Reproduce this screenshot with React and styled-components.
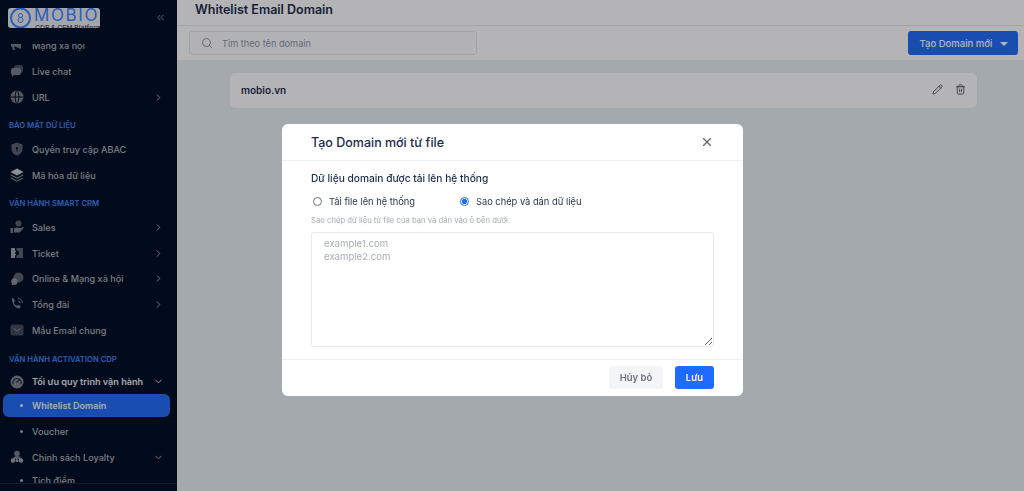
import React from 'react';
import styled, { createGlobalStyle } from 'styled-components';
import { ChevronRight, ChevronDown, ChevronsLeft, Search, Pencil, Trash2, X } from 'lucide-react';

const FONT = '"Inter", "Noto Sans", sans-serif';

const GlobalStyle = createGlobalStyle`
  html, body { margin: 0; padding: 0; height: 100%; }
  body { font-family: ${FONT}; background: #fff; overflow: hidden; }
  * { box-sizing: border-box; }
`;

const Page = styled.div`
  display: flex;
  width: 1024px;
  height: 491px;
  overflow: hidden;
`;

const Sidebar = styled.aside`
  width: 177px;
  flex: none;
  height: 100%;
  background: #010e20;
  display: flex;
  flex-direction: column;
`;

const SidebarHead = styled.div`
  height: 44px;
  flex: none;
  padding: 8px 0 0 8px;
  display: flex;
  justify-content: space-between;
  align-items: flex-start;
`;

const Logo = styled.div`
  width: 92px;
  height: 20px;
  background: #eaebf0;
  border-radius: 3px;
  display: flex;
  align-items: flex-start;
  overflow: hidden;
  color: #3b85ff;
`;

const LogoText = styled.div`
  display: flex;
  flex-direction: column;
  margin-left: 2px;
`;

const LogoName = styled.span`
  font-size: 17px;
  font-weight: 400;
  line-height: 15px;
  letter-spacing: 1.6px;
`;

const LogoSub = styled.span`
  font-size: 6.8px;
  font-weight: 600;
  line-height: 7px;
  color: #4d5560;
  white-space: nowrap;
  margin: 1px 0 0 1px;
`;

const Collapse = styled.span`
  color: #9096a0;
  margin: 4px 11px 0 0;
  display: flex;
`;

const Menu = styled.nav`
  flex: 1;
  overflow: hidden;
  padding: 0 7px 0 3px;
`;

const Scrolled = styled.div`
  margin-top: -12px;
`;

const Row = styled.div`
  height: ${p => p.$h || 26}px;
  display: flex;
  align-items: center;
  padding-left: 6px;
  padding-right: 6px;
  border-radius: 6px;
  font-size: 9.1px;
  font-weight: ${p => (p.$strong ? 600 : 500)};
  color: ${p => (p.$strong ? '#e8e9ec' : '#b0b2b8')};
  white-space: nowrap;
`;

const ActiveRow = styled(Row)`
  height: 23px;
  margin-bottom: 1px;
  background: #216cf5;
  color: #eef1f6;
  font-weight: 600;
`;

const IconBox = styled.span`
  width: 16px;
  height: 16px;
  margin-right: 7px;
  display: flex;
  align-items: center;
  justify-content: center;
  flex: none;
`;

const Dot = styled.span`
  width: 3px;
  height: 3px;
  border-radius: 50%;
  background: currentColor;
  margin: 0 9px 0 11px;
  flex: none;
`;

const Label = styled.span`
  flex: 1;
`;

const Section = styled.div`
  font-size: 7.65px;
  font-weight: 600;
  color: #3f82f5;
  padding: 1px 0 0 6px;
  height: 16px;
  line-height: 16px;
  margin-top: ${p => p.$top}px;
  margin-bottom: ${p => p.$bottom}px;
  white-space: nowrap;
`;

const SidebarFoot = styled.div`
  height: 8px;
  flex: none;
  border-top: 1px solid #1d2638;
`;

const Main = styled.main`
  flex: 1;
  display: flex;
  flex-direction: column;
  background: #e9eff2;
  min-width: 0;
`;

const TopBar = styled.header`
  height: 26px;
  background: #fff;
  border-bottom: 1px solid #e8eaee;
  padding-left: 18px;
  font-size: 12.5px;
  font-weight: 600;
  color: #1c2b4a;
  line-height: 20px;
`;

const Toolbar = styled.div`
  height: 34px;
  background: #fff;
  display: flex;
  align-items: center;
  justify-content: space-between;
  padding: 0 6px 0 12px;
  flex: none;
`;

const SearchBox = styled.div`
  width: 288px;
  height: 24px;
  border: 1px solid #e3e6ea;
  border-radius: 3px;
  display: flex;
  align-items: center;
  padding-left: 11px;
  gap: 9px;
  font-size: 9.2px;
  color: #8d939e;
  background: #fdfdfe;
`;

const CreateButton = styled.button`
  width: 110px;
  height: 24px;
  border: 0;
  border-radius: 3px;
  background: #216cf5;
  color: #fff;
  font: 500 9.5px ${FONT};
  display: flex;
  align-items: center;
  justify-content: center;
  gap: 8px;
  padding: 0 0 0 2px;
`;

const Caret = styled.span`
  width: 0;
  height: 0;
  border-left: 4px solid transparent;
  border-right: 4px solid transparent;
  border-top: 4px solid #fff;
  margin-top: 2px;
`;

const Content = styled.div`
  flex: 1;
  padding: 13px 47px 0 53px;
`;

const DomainCard = styled.div`
  height: 35px;
  background: #fff;
  border-radius: 5px;
  display: flex;
  align-items: center;
  justify-content: space-between;
  padding: 0 11px 2px;
  font-size: 10px;
  font-weight: 600;
  color: #1c2b4a;
  box-shadow: 0 0 1px rgba(0, 0, 0, 0.12);
`;

const CardActions = styled.div`
  display: flex;
  gap: 12px;
  color: #4f5662;
`;

const Overlay = styled.div`
  position: fixed;
  inset: 0;
  background: rgba(5, 7, 15, 0.3);
  display: flex;
  align-items: flex-start;
  justify-content: center;
  padding: 124px 0 0 1px;
`;

const Dialog = styled.div`
  width: 461px;
  height: 272px;
  background: #fff;
  border-radius: 6px;
  display: flex;
  flex-direction: column;
`;

const DialogHead = styled.div`
  height: 37px;
  flex: none;
  border-bottom: 1px solid #eef0f3;
  padding: 0 29px;
  display: flex;
  align-items: center;
  justify-content: space-between;
  font-size: 12.5px;
  font-weight: 500;
  color: #1c2b4a;
`;

const CloseIcon = styled.span`
  color: #5f6675;
  display: flex;
`;

const DialogBody = styled.div`
  flex: 1;
  padding: 10px 29px 0;
  display: flex;
  flex-direction: column;
`;

const FieldTitle = styled.div`
  font-size: 10.2px;
  font-weight: 500;
  color: #1c2b4a;
  line-height: 14px;
`;

const Radios = styled.div`
  display: flex;
  margin-top: 9px;
  height: 14px;
`;

const RadioItem = styled.label`
  display: flex;
  align-items: center;
  gap: 7px;
  padding-left: 2px;
  width: 147px;
  font-size: 9.3px;
  color: #2b3648;
  white-space: nowrap;
`;

const RadioMark = styled.span`
  width: 9px;
  height: 9px;
  border-radius: 50%;
  border: 1px solid ${p => (p.$on ? '#216cf5' : '#6b7280')};
  background: ${p => (p.$on ? 'radial-gradient(circle, #216cf5 0 2.4px, #fff 2.9px)' : '#fff')};
  flex: none;
`;

const Hint = styled.div`
  margin-top: 8px;
  font-size: 7.7px;
  line-height: 10px;
  color: #a5aab3;
`;

const Area = styled.textarea`
  margin-top: 6px;
  width: 403px;
  height: 115px;
  border: 1px solid #e8eaee;
  border-radius: 3px;
  padding: 4px 12px;
  font: 400 9.6px/13px ${FONT};
  color: #333;
  outline: none;
  &::placeholder { color: #a9adb5; }
`;

const DialogFoot = styled.div`
  height: 37px;
  flex: none;
  border-top: 1px solid #eef0f3;
  padding: 6px 29px 0 0;
  display: flex;
  justify-content: flex-end;
  gap: 12px;
`;

const GhostButton = styled.button`
  width: 54px;
  height: 23px;
  border: 0;
  border-radius: 3px;
  background: #f4f5f7;
  color: #6b7280;
  font: 600 9.5px ${FONT};
  padding: 0;
`;

const SaveButton = styled(GhostButton)`
  width: 39px;
  background: #1f6bff;
  color: #fff;
`;

// duotone sidebar glyphs, drawn on a 16 box
const Glyph = ({ children }) => (
  <svg width="16" height="16" viewBox="0 0 16 16" fill="#7a7f89">{children}</svg>
);

const MegaphoneIcon = () => (
  <Glyph><path d="M2 6h4l6-3v9L6 9.5H5l1 3.5H4L3 9.500H2z" /></Glyph>
);
const ChatIcon = () => (
  <Glyph>
    <rect x="5" y="2" width="9" height="8" rx="2.500" fill="#4c515c" />
    <path d="M4 5h6a2 2 0 0 1 2 2v3a2 2 0 0 1-2 2H5l-2 2v-2.200A2 2 0 0 1 2 10V7a2 2 0 0 1 2-2z" />
  </Glyph>
);
const GlobeIcon = () => (
  <Glyph>
    <circle cx="8" cy="8" r="6.500" />
    <path d="M8 1.500c-2.500 2-2.500 11 0 13M8 1.500c2.500 2 2.500 11 0 13M1.500 8h13" fill="none" stroke="#010e20" strokeWidth="1" />
  </Glyph>
);
const ShieldIcon = () => (
  <Glyph>
    <path d="M8 1.500l5.500 2v4.500c0 3.500-2.500 5.500-5.500 6.500-3-1-5.500-3-5.500-6.500V3.500z" fill="#5c616c" />
    <circle cx="8" cy="7" r="1.100" fill="#010e20" />
    <rect x="7.500" y="7.500" width="1" height="3" fill="#010e20" />
  </Glyph>
);
const LayersIcon = () => (
  <Glyph>
    <path d="M8 1.500L14.500 5 8 8.500 1.500 5z" fill="#c9cbd0" />
    <path d="M2 8l6 3.200L14 8M2 11l6 3.200L14 11" fill="none" stroke="#8a8e96" strokeWidth="1.100" />
  </Glyph>
);
const SalesIcon = () => (
  <Glyph>
    <circle cx="9.500" cy="4.500" r="3" fill="#5c616c" />
    <path d="M1.500 9h2.500v5H1.500zM5 9.500c2-1.500 3.500-1 5-.5h2l2-1c.8 0 .8 1.200 0 1.800L10.500 13.500H5z" />
  </Glyph>
);
const TicketIcon = () => (
  <Glyph>
    <path d="M2 3h4v2.500a1 1 0 0 1 0 2v1a1 1 0 0 1 0 2V13H2z" fill="#a0a4ab" />
    <path d="M7.500 3H14v10H7.500v-2.500a1.500 1.500 0 0 0 0-5z" fill="#5c616c" />
  </Glyph>
);
const BubblesIcon = () => (
  <Glyph>
    <circle cx="9.500" cy="6.500" r="5" fill="#5c616c" />
    <path d="M5 7a3.500 3.500 0 0 1 0 7H2.500l.5-1.300A3.500 3.500 0 0 1 5 7z" fill="#8d9199" />
  </Glyph>
);
const PhoneIcon = () => (
  <Glyph>
    <path d="M3 2l2 .500 1 3-1.200 1c.5 1.500 1.700 2.700 3.200 3.300l1.100-1 2.400 1.200-.5 2.500c-4 .5-8.500-4.500-8-10.500z" fill="#7a7f89" />
    <path d="M9 2.500a4.500 4.500 0 0 1 4.500 4.500M9 5a2 2 0 0 1 2 2" fill="none" stroke="#7a7f89" strokeWidth="1" />
  </Glyph>
);
const MailIcon = () => (
  <Glyph>
    <rect x="1.500" y="2.500" width="13" height="11" rx="2" fill="#444a56" />
    <path d="M4.500 6.500L8 9l3.500-2.500" fill="none" stroke="#8a8e96" strokeWidth="1" />
  </Glyph>
);
const GaugeIcon = () => (
  <Glyph>
    <circle cx="8" cy="8" r="6.500" fill="#80848c" />
    <path d="M4 10a4.200 4.200 0 1 1 8 0" fill="none" stroke="#1e2530" strokeWidth="1.200" />
    <path d="M7.500 8.500l3-3" stroke="#1e2530" strokeWidth="1.200" />
  </Glyph>
);
const LoyaltyIcon = () => (
  <Glyph>
    <circle cx="8" cy="4.500" r="2.800" fill="#7a7f89" />
    <path d="M3.500 10c.5-2 2.500-3 4.500-3s4 1 4.500 3z" fill="#7a7f89" />
    <circle cx="4" cy="11.500" r="2.200" fill="#a0a4ab" />
    <circle cx="12" cy="11.500" r="2.200" fill="#a0a4ab" />
    <circle cx="8" cy="11.500" r="1.500" fill="#a0a4ab" />
  </Glyph>
);

const MenuItem = ({ icon: Icon, label, arrow, strong, h }) => (
  <Row $strong={strong} $h={h}>
    <IconBox><Icon /></IconBox>
    <Label>{label}</Label>
    {arrow === 'right' && <ChevronRight size={11} />}
    {arrow === 'down' && <ChevronDown size={11} />}
  </Row>
);

export default function App() {
  return (
    <>
      <GlobalStyle />
      <Page>
        <Sidebar>
          <SidebarHead>
            <Logo>
              <svg width="24" height="20" viewBox="0 0 24 20" fill="none" stroke="#3b85ff" style={{ flex: 'none' }}>
                <circle cx="12.500" cy="10" r="9.500" strokeWidth="2" />
                <circle cx="12.500" cy="7.500" r="2" strokeWidth="1" />
                <circle cx="12.500" cy="12" r="2.500" strokeWidth="1" />
              </svg>
              <LogoText>
                <LogoName>MOBIO</LogoName>
                <LogoSub>CDP &amp; CEM Platform</LogoSub>
              </LogoText>
            </Logo>
            <Collapse><ChevronsLeft size={11} /></Collapse>
          </SidebarHead>
          <Menu>
            <Scrolled>
              <MenuItem icon={MegaphoneIcon} label="Mạng xã hội" />
              <MenuItem icon={ChatIcon} label="Live chat" />
              <MenuItem icon={GlobeIcon} label="URL" arrow="right" />
              <Section $top={7} $bottom={3}>BẢO MẬT DỮ LIỆU</Section>
              <MenuItem icon={ShieldIcon} label="Quyền truy cập ABAC" />
              <MenuItem icon={LayersIcon} label="Mã hóa dữ liệu" />
              <Section $top={7} $bottom={3}>VẬN HÀNH SMART CRM</Section>
              <MenuItem icon={SalesIcon} label="Sales" arrow="right" />
              <MenuItem icon={TicketIcon} label="Ticket" arrow="right" />
              <MenuItem icon={BubblesIcon} label="Online & Mạng xã hội" arrow="right" h={25} />
              <MenuItem icon={PhoneIcon} label="Tổng đài" arrow="right" />
              <MenuItem icon={MailIcon} label="Mẫu Email chung" />
              <Section $top={8} $bottom={2}>VẬN HÀNH ACTIVATION CDP</Section>
              <MenuItem icon={GaugeIcon} label="Tối ưu quy trình vận hành" arrow="down" strong h={25} />
              <ActiveRow><Dot />Whitelist Domain</ActiveRow>
              <Row><Dot />Voucher</Row>
              <MenuItem icon={LoyaltyIcon} label="Chính sách Loyalty" arrow="down" />
              <Row $h={20}><Dot />Tích điểm</Row>
            </Scrolled>
          </Menu>
          <SidebarFoot />
        </Sidebar>
        <Main>
          <TopBar>Whitelist Email Domain</TopBar>
          <Toolbar>
            <SearchBox>
              <Search size={12} />
              Tìm theo tên domain
            </SearchBox>
            <CreateButton>Tạo Domain mới <Caret /></CreateButton>
          </Toolbar>
          <Content>
            <DomainCard>
              mobio.vn
              <CardActions>
                <Pencil size={11} />
                <Trash2 size={11} />
              </CardActions>
            </DomainCard>
          </Content>
        </Main>
      </Page>
      <Overlay>
        <Dialog>
          <DialogHead>
            Tạo Domain mới từ file
            <CloseIcon><X size={14} /></CloseIcon>
          </DialogHead>
          <DialogBody>
            <FieldTitle>Dữ liệu domain được tải lên hệ thống</FieldTitle>
            <Radios>
              <RadioItem><RadioMark />Tải file lên hệ thống</RadioItem>
              <RadioItem><RadioMark $on />Sao chép và dán dữ liệu</RadioItem>
            </Radios>
            <Hint>Sao chép dữ liệu từ file của bạn và dán vào ô bên dưới.</Hint>
            <Area placeholder={'example1.com\nexample2.com'} />
          </DialogBody>
          <DialogFoot>
            <GhostButton>Hủy bỏ</GhostButton>
            <SaveButton>Lưu</SaveButton>
          </DialogFoot>
        </Dialog>
      </Overlay>
    </>
  );
}
